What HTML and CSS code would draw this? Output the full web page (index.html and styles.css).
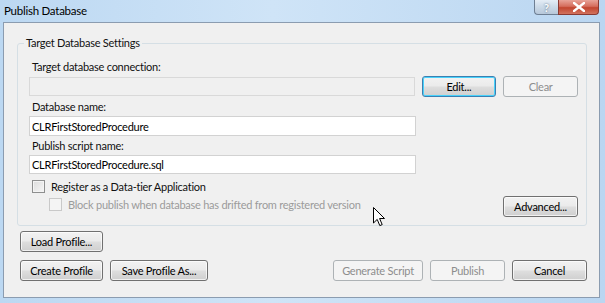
FILE: index.html
```html
<!DOCTYPE html>
<html lang="en">
<head>
  <meta charset="UTF-8">
  <title>Publish Database</title>
  <link rel="stylesheet" href="styles.css">
</head>
<body>

<div class="window">
  <!-- Barra de título -->
  <div class="titlebar">
    <span class="title">Publish Database</span>
    <div class="caption-btns">
      <span class="cap-help">?</span>
      <span class="cap-close">
        <svg width="12" height="10" viewBox="0 0 12 10">
          <path d="M1 1 L11 9 M11 1 L1 9" stroke="#fff" stroke-width="2.4" stroke-linecap="square"/>
        </svg>
      </span>
    </div>
  </div>

  <div class="client">
    <fieldset class="group">
      <legend>Target Database Settings</legend>

      <label class="lbl">Target database connection:</label>
      <div class="row">
        <div class="field conn"></div>
        <button class="btn focus">Edit...</button>
        <button class="btn" disabled>Clear</button>
      </div>

      <label class="lbl">Database name:</label>
      <div class="row">
        <input class="field txt" type="text" value="CLRFirstStoredProcedure">
      </div>

      <label class="lbl lbl-script">Publish script name:</label>
      <div class="row">
        <input class="field txt script" type="text" value="CLRFirstStoredProcedure.sql">
      </div>

      <div class="check-row">
        <span class="box"></span>
        <span>Register as a Data-tier Application</span>
      </div>

      <div class="row adv-row">
        <div class="check-row sub off">
          <span class="box"></span>
          <span>Block publish when database has drifted from registered version</span>
        </div>
        <button class="btn">Advanced...</button>
      </div>
    </fieldset>

    <div class="profile-row">
      <button class="btn w-load">Load Profile...</button>
    </div>

    <div class="footer">
      <div class="footer-left">
        <button class="btn w-load">Create Profile</button>
        <button class="btn w-save">Save Profile As...</button>
      </div>
      <div class="footer-right">
        <button class="btn w-gen" disabled>Generate Script</button>
        <button class="btn" disabled>Publish</button>
        <button class="btn">Cancel</button>
      </div>
    </div>
  </div>

  <!-- ponteiro do rato -->
  <svg class="cursor" width="13" height="20" viewBox="0 0 13 20">
    <path d="M0.5 0.5 L0.5 16 L4.2 12.4 L6.8 18.6 L9.2 17.6 L6.6 11.5 L11.5 11.5 Z" fill="#fff" stroke="#000" stroke-width="1"/>
  </svg>
</div>

</body>
</html>
```

FILE: styles.css
```css
/* Geral */
body {
  margin: 0;
  font-family: 'Lato', 'Open Sans', sans-serif;
  font-size: 11px;
  letter-spacing: -0.25px;
  color: #111;
}

.window {
  position: relative;
  width: 605px;
  height: 303px;
  box-sizing: border-box;
  padding: 0 5px 5px 3px;
  background: linear-gradient(to right, #bcd8f2 0%, #cfe4f7 45%, #bad6f1 100%);
  overflow: hidden;
}

/* Barra de título */
.titlebar {
  height: 22px;
  display: flex;
  align-items: flex-start;
  justify-content: space-between;
}

.title {
  padding: 4px 0 0 1px;
  font-size: 11.5px;
  color: #000;
}

.caption-btns {
  display: flex;
  margin-right: 1px;
}

.cap-help, .cap-close {
  height: 14px;
  display: flex;
  align-items: center;
  justify-content: center;
  border: 1px solid #6e7f93;
  border-top: none;
}

.cap-help {
  width: 23px;
  border-radius: 0 0 0 4px;
  border-right: none;
  background: linear-gradient(to bottom, #e4edf6 0%, #cbd9e7 50%, #b7c8da 100%);
  color: #fff;
  font-weight: 700;
  font-size: 11px;
  text-shadow: 0 0 2px #435a74;
}

.cap-close {
  width: 39px;
  border-radius: 0 0 4px 0;
  border-color: #8a3a33;
  background: linear-gradient(to bottom, #e8a398 0%, #d56d5d 45%, #c2452f 55%, #d1735f 100%);
}

/* Área cliente */
.client {
  height: 276px;
  box-sizing: border-box;
  border: 1px solid #8b9cb0;
  background-color: #f0f0f0;
  padding: 0 12px 0 0;
}

/* Grupo */
.group {
  margin: 13px 0 0 13px;
  padding: 10px 8px 8px 11px;
  border: 1px solid #d5dfe5;
  border-radius: 3px;
  min-width: 0;
}

.group legend {
  margin-left: -5px;
  padding: 0 2px;
  line-height: 14px;
}

.lbl {
  display: block;
  line-height: 14px;
  padding-left: 3px;
}

.row {
  display: flex;
  align-items: center;
  gap: 7px;
}

.row + .lbl {
  margin-top: 3px;
}

.lbl + .row {
  margin-top: 2px;
}

.field {
  width: 387px;
  height: 20px;
  box-sizing: border-box;
  border: 1px solid #cbcbcb;
  background-color: #fff;
}

.conn {
  height: 19px;
  background-color: #f0f0f0;
  border-color: #d9d9d9;
}

.txt {
  margin: 0;
  padding: 0 2px;
  font: inherit;
  letter-spacing: inherit;
  color: #000;
  border-color: #d2d2d2;
  outline: none;
}

.lbl-script {
  margin-top: 5px;
}

.script {
  height: 19px;
}

/* Botões */
.btn {
  width: 75px;
  height: 21px;
  padding: 0;
  margin: 0;
  font: inherit;
  letter-spacing: inherit;
  color: #000;
  border: 1px solid #707070;
  border-radius: 3px;
  background: linear-gradient(to bottom, #f2f2f2 0%, #ebebeb 45%, #dddddd 55%, #cfcfcf 100%);
  box-shadow: inset 0 0 0 1px rgba(255, 255, 255, 0.7);
}

.btn.focus {
  border-color: #3c7fb1;
  box-shadow: inset 0 0 0 1px #48d2fb;
}

.btn:disabled {
  color: #8d8d8d;
  border-color: #adb2b5;
  background: #f4f4f4;
  box-shadow: none;
}

.w-load {
  width: 83px;
}

.w-save {
  width: 98px;
}

.w-gen {
  width: 90px;
}

/* Caixas de verificação */
.check-row {
  display: flex;
  align-items: center;
  gap: 6px;
  height: 16px;
  margin-top: 4px;
  padding-left: 3px;
}

.box {
  width: 13px;
  height: 13px;
  box-sizing: border-box;
  border: 1px solid #8e8f8f;
  background: linear-gradient(135deg, #dcdcdc 0%, #f6f6f6 100%);
  box-shadow: inset 0 0 0 1px #f4f4f4;
}

.adv-row {
  align-items: flex-start;
  justify-content: space-between;
  margin-top: 2px;
}

.check-row.sub {
  margin-top: 0;
  padding-left: 20px;
}

.off {
  color: #9b9b9b;
}

.off .box {
  border-color: #c9c9c9;
  background: #f4f4f4;
  box-shadow: none;
}

/* Rodapé */
.profile-row {
  padding: 5px 0 0 16px;
}

.footer {
  display: flex;
  justify-content: space-between;
  padding: 8px 0 0 16px;
}

.footer-left, .footer-right {
  display: flex;
  gap: 7px;
}

.cursor {
  position: absolute;
  left: 373px;
  top: 207px;
}
```
